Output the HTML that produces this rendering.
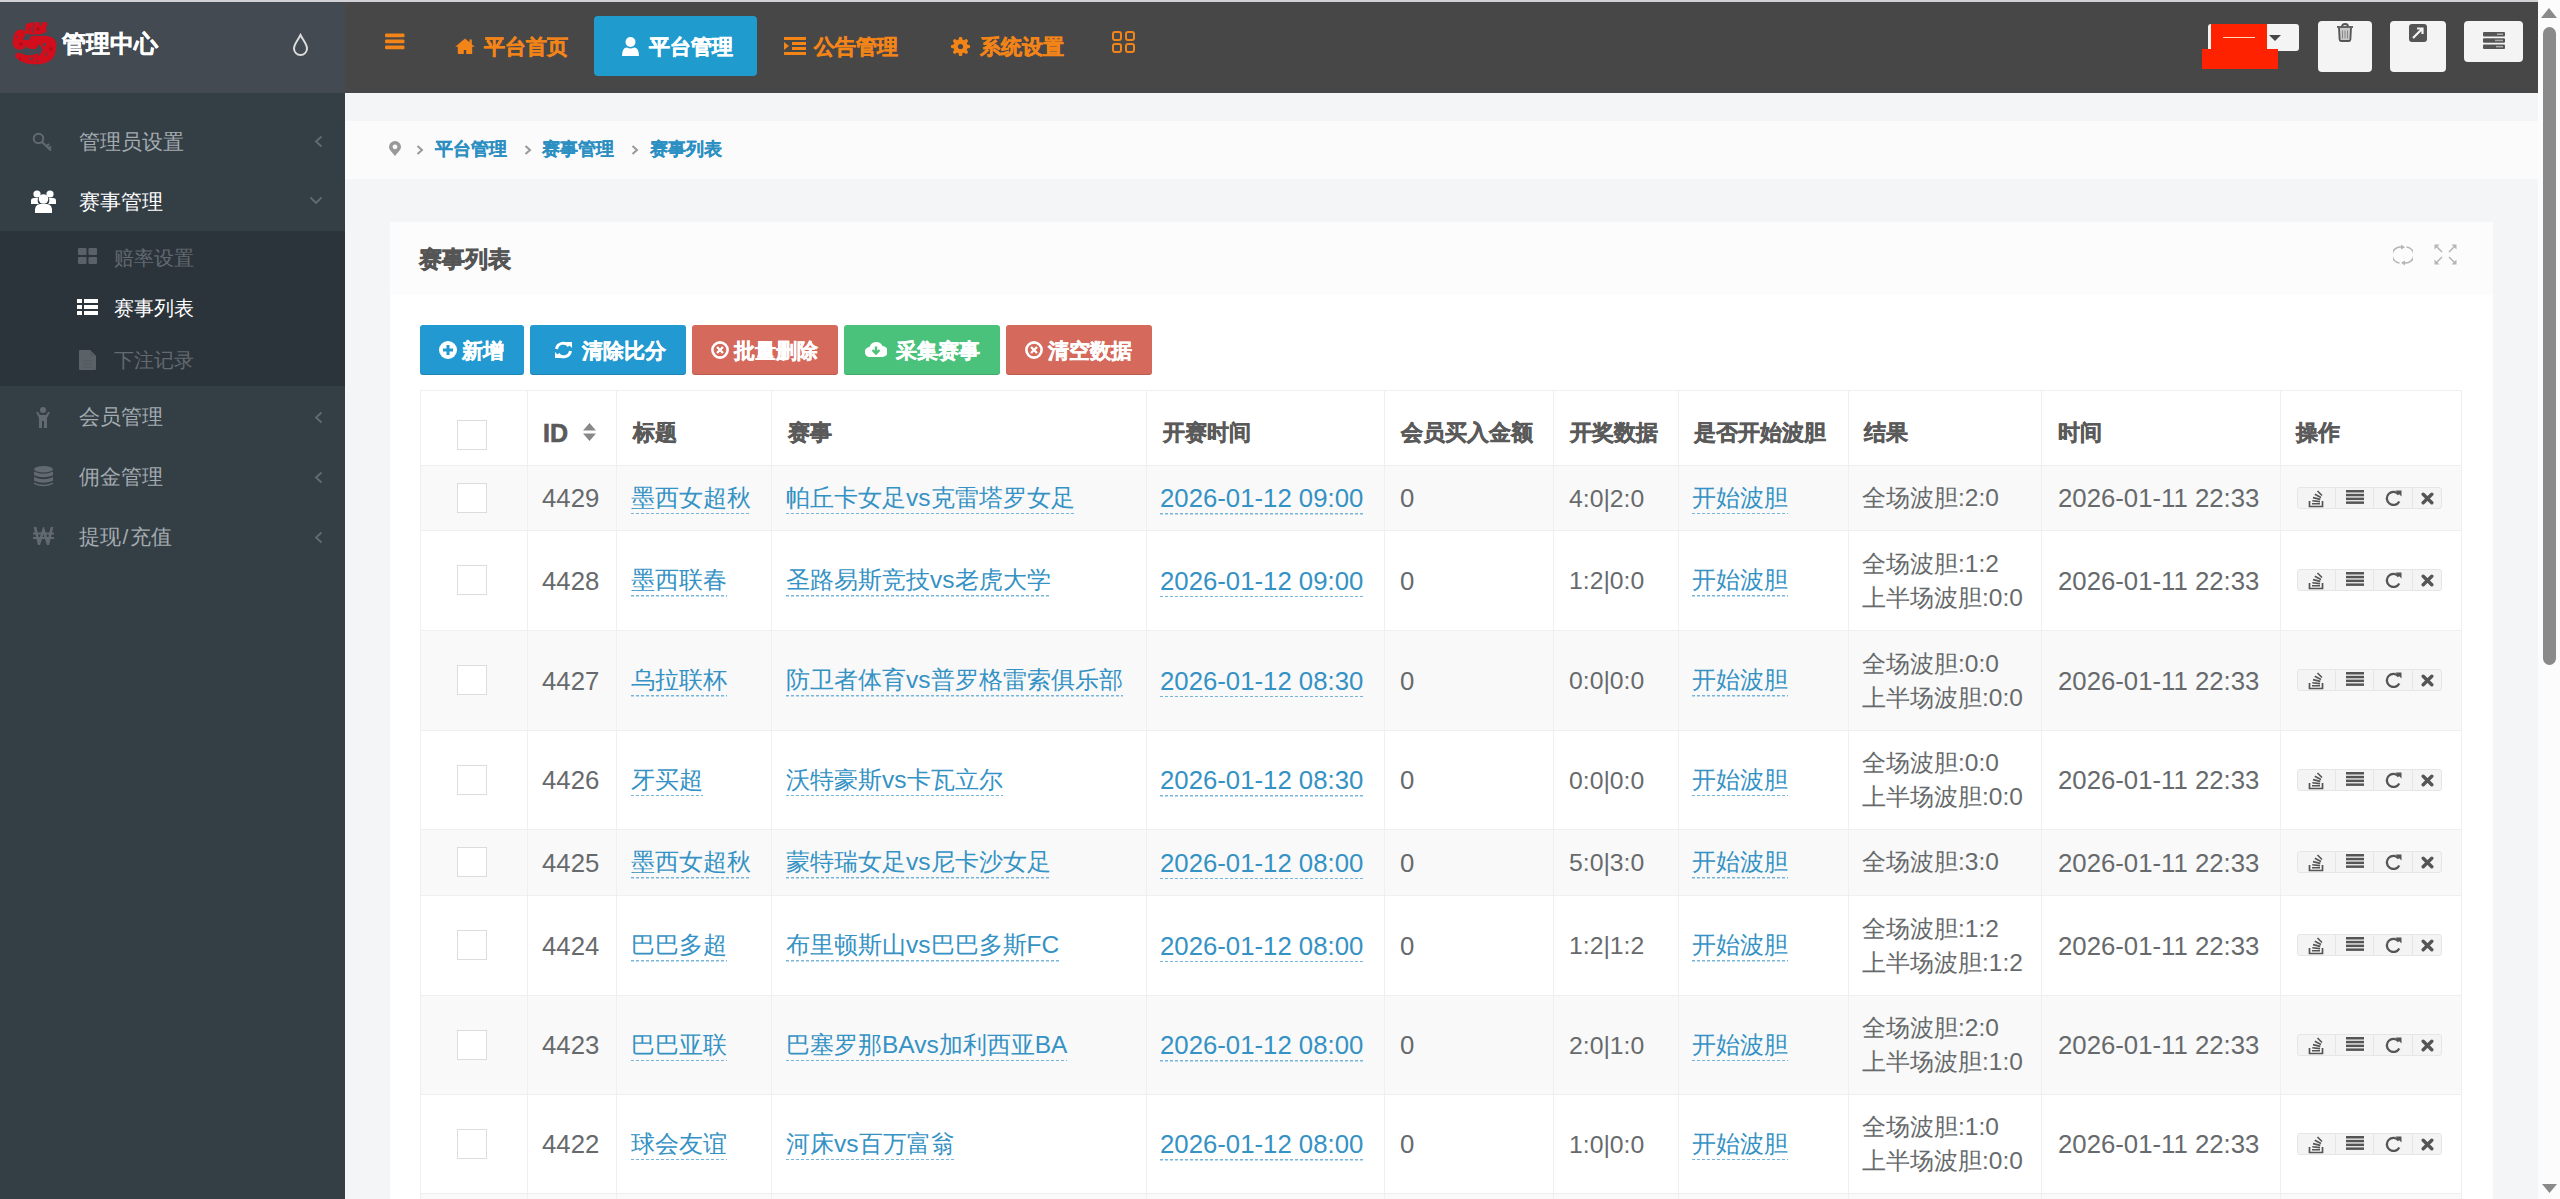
<!DOCTYPE html><html><head><meta charset="utf-8"><style>
*{box-sizing:border-box;margin:0;padding:0}
html,body{width:2560px;height:1199px;overflow:hidden;background:#f3f5f7;font-family:"Liberation Sans",sans-serif;color:#676a6c}
.a{position:absolute;white-space:nowrap}
.t{position:absolute;white-space:nowrap}
svg{position:absolute;display:block}
.lt{font-size:24.5px}
.lk{background:repeating-linear-gradient(90deg,#78b5da 0 3px,transparent 3px 5px) left bottom/100% 1.5px no-repeat;padding-bottom:3.5px}
</style></head><body><div class="a" style="left:0px;top:0px;width:2538px;height:2px;background:#d2d1d5;"></div>
<div class="a" style="left:0px;top:2px;width:345px;height:91px;background:#434a52;"></div>
<div class="a" style="left:0px;top:93px;width:345px;height:1106px;background:#343e45;"></div>
<div class="a" style="left:0px;top:231px;width:345px;height:155px;background:#2c343b;"></div>
<div class="a" style="left:345px;top:2px;width:2193px;height:91px;background:#474747;"></div>
<div class="a" style="left:2538px;top:0px;width:22px;height:1199px;background:#fcfcfc;"></div>
<svg style="left:8px;top:18px;" width="54" height="50" viewBox="0 0 54 50"><defs><filter id="bl" x="-20%" y="-20%" width="140%" height="140%"><feGaussianBlur stdDeviation="0.55"/></filter></defs>
<g filter="url(#bl)"><g fill="#d20d1a">
<path d="M18 6 Q24 3.5 31 4.5 L38 4 Q41 6 38 9 L38.5 14 Q33 17 26 16.5 Q20 17 17 15 Z"/>
<path d="M8 13 Q13 10 17 13 L17 19 Q15 26 17 30 L12 32 Q6 31 5 27 Q4 20 8 13Z"/>
<path d="M14 21 Q24 17 33 18 Q42 17 46 21 Q49 24 48 30 Q48 37 44 41 Q40 45 33 46 Q24 47 17 45 Q10 43 7 38 Q8 34 12 35 Q18 38 24 37 Q30 36 31 33 Q28 30 24 31 Q18 30 16 27Z"/>
</g><g fill="#434a52">
<path d="M16 19 L23 18 L21 22 L15 22Z"/>
<ellipse cx="15.5" cy="33.5" rx="3.2" ry="2.6"/>
<path d="M31 26 L35 31.5 L31 38 L27.5 32Z"/>
<circle cx="36.5" cy="26.5" r="1.6"/>
<path d="M25 6 L27 4 L26 15 L24 15Z" opacity="0.5"/>
<circle cx="33" cy="6" r="1.3"/>
<path d="M20 40 L26 39 L24 43Z" opacity="0.6"/>
<path d="M41 14 L44 18 L40 19Z" opacity="0.7"/>
<circle cx="9" cy="19" r="1.2" opacity="0.5"/>
<circle cx="29" cy="43" r="1.2" opacity="0.5"/>
<path d="M36 36 L40 34 L38 39Z" opacity="0.6"/>
<path d="M20 11 L23 9 L22 14Z" opacity="0.5"/>
</g><g fill="#9a1520" opacity="0.55"><circle cx="13" cy="26" r="2"/><circle cx="43" cy="31" r="2"/><circle cx="30" cy="11" r="2"/><circle cx="12" cy="41" r="1.6"/></g></g></svg>
<div class="t" style="left:62.0px;top:32.0px;font-size:24px;line-height:24px;font-weight:bold;color:#ffffff;-webkit-text-stroke:0.3px #ffffff;">管理中心</div>
<svg style="left:292px;top:33px;" width="17" height="24" viewBox="0 0 17 24"><path d="M8.5 2 C6 7 2 11 2 15.5 A6.5 6.5 0 0 0 15 15.5 C15 11 11 7 8.5 2Z" fill="none" stroke="#dcdcdc" stroke-width="2"/></svg>
<div class="t" style="left:79.0px;top:131.0px;font-size:21px;line-height:21px;font-weight:normal;color:#a3abb0;">管理员设置</div>
<div class="t" style="left:79.0px;top:191.0px;font-size:21px;line-height:21px;font-weight:normal;color:#ffffff;">赛事管理</div>
<div class="t" style="left:114.0px;top:248.0px;font-size:20px;line-height:20px;font-weight:normal;color:#626a70;">赔率设置</div>
<div class="t" style="left:114.0px;top:298.0px;font-size:20px;line-height:20px;font-weight:normal;color:#ffffff;">赛事列表</div>
<div class="t" style="left:114.0px;top:350.0px;font-size:20px;line-height:20px;font-weight:normal;color:#626a70;">下注记录</div>
<div class="t" style="left:79.0px;top:406.0px;font-size:21px;line-height:21px;font-weight:normal;color:#a3abb0;">会员管理</div>
<div class="t" style="left:79.0px;top:466.0px;font-size:21px;line-height:21px;font-weight:normal;color:#a3abb0;">佣金管理</div>
<div class="t" style="left:79.0px;top:526.0px;font-size:21px;line-height:21px;font-weight:normal;color:#a3abb0;">提现<span style="margin:0 1.5px">/</span>充值</div>
<svg style="left:314px;top:135px;" width="9" height="13" viewBox="0 0 9 13"><path d="M7.5 1.5 L2 6.5 L7.5 11.5" fill="none" stroke="#636b71" stroke-width="1.8"/></svg>
<svg style="left:314px;top:411px;" width="9" height="13" viewBox="0 0 9 13"><path d="M7.5 1.5 L2 6.5 L7.5 11.5" fill="none" stroke="#636b71" stroke-width="1.8"/></svg>
<svg style="left:314px;top:471px;" width="9" height="13" viewBox="0 0 9 13"><path d="M7.5 1.5 L2 6.5 L7.5 11.5" fill="none" stroke="#636b71" stroke-width="1.8"/></svg>
<svg style="left:314px;top:531px;" width="9" height="13" viewBox="0 0 9 13"><path d="M7.5 1.5 L2 6.5 L7.5 11.5" fill="none" stroke="#636b71" stroke-width="1.8"/></svg>
<svg style="left:309px;top:196px;" width="14" height="9" viewBox="0 0 14 9"><path d="M1.5 1.5 L7 7 L12.5 1.5" fill="none" stroke="#636b71" stroke-width="1.8"/></svg>
<svg style="left:32px;top:132px;" width="21" height="20" viewBox="0 0 21 20"><g fill="none" stroke="#626a70" stroke-width="2"><circle cx="6.5" cy="6.5" r="4.8"/><path d="M10 10 L19 18.5 M14.5 14.5 L17 12 M16.8 16.8 L19 14.5"/></g></svg>
<svg style="left:31px;top:190px;" width="25" height="23" viewBox="0 0 25 23"><g fill="#fff"><circle cx="6" cy="4" r="3.6"/><circle cx="19" cy="4" r="3.6"/><circle cx="12.5" cy="9" r="4.8"/><path d="M0 10.5 Q0 8 3 8 L7 8 Q6 12 8 14 L0 14Z"/><path d="M25 10.5 Q25 8 22 8 L18 8 Q19 12 17 14 L25 14Z"/><path d="M4 23 Q3 14.5 9 14 L16 14 Q22 14.5 21 23Z"/></g></svg>
<svg style="left:78px;top:248px;" width="19" height="16" viewBox="0 0 19 16"><g fill="#5a6268"><rect x="0" y="0" width="8.5" height="7" rx="1"/><rect x="10.5" y="0" width="8.5" height="7" rx="1"/><rect x="0" y="9" width="8.5" height="7" rx="1"/><rect x="10.5" y="9" width="8.5" height="7" rx="1"/></g></svg>
<svg style="left:77px;top:299px;" width="21" height="16" viewBox="0 0 21 16"><g fill="#fff"><rect x="0" y="0" width="5" height="4"/><rect x="7" y="0" width="14" height="4"/><rect x="0" y="6" width="5" height="4"/><rect x="7" y="6" width="14" height="4"/><rect x="0" y="12" width="5" height="4"/><rect x="7" y="12" width="14" height="4"/></g></svg>
<svg style="left:79px;top:350px;" width="17" height="20" viewBox="0 0 17 20"><path d="M0 1 Q0 0 1 0 L11 0 L17 6 L17 19 Q17 20 16 20 L1 20 Q0 20 0 19Z" fill="#5a6268"/><path d="M11 0 L11 6 L17 6" fill="#545c61"/><g stroke="#545c61" stroke-width="1.4"><path d="M4 11 H13 M4 14 H13 M4 17 H13"/></g></svg>
<svg style="left:35px;top:407px;" width="16" height="21" viewBox="0 0 16 21"><g fill="#626a70"><circle cx="8" cy="3" r="3"/><path d="M1 5 L3 5 L5 8 L11 8 L13 5 L15 5 L12 11 L12 21 L9 21 L9 14 L7 14 L7 21 L4 21 L4 11Z"/></g></svg>
<svg style="left:34px;top:466px;" width="19" height="21" viewBox="0 0 19 21"><g fill="#626a70"><ellipse cx="9.5" cy="3.2" rx="9.5" ry="3.2"/><path d="M0 5.5 Q9.5 10 19 5.5 L19 9.2 Q9.5 13.5 0 9.2Z"/><path d="M0 11 Q9.5 15.5 19 11 L19 14.7 Q9.5 19 0 14.7Z"/><path d="M0 16.5 Q9.5 21 19 16.5 L19 18 Q9.5 22.5 0 18Z"/></g></svg>
<svg style="left:33px;top:527px;" width="21" height="18" viewBox="0 0 21 18"><g fill="none" stroke="#626a70" stroke-width="2.6"><path d="M2 0 L6 17 L10.5 3 L15 17 L19 0"/><path d="M0 6.5 H21 M0 11 H21" stroke-width="2"/></g></svg>
<svg style="left:385px;top:33px;" width="20" height="17" viewBox="0 0 20 17"><g fill="#f28418"><rect x="0" y="0.6" width="19.5" height="3.6" rx="1.2"/><rect x="0" y="6.6" width="19.5" height="3.6" rx="1.2"/><rect x="0" y="12.6" width="19.5" height="3.6" rx="1.2"/></g></svg>
<svg style="left:455px;top:37px;" width="20" height="18" viewBox="0 0 20 18"><path d="M10 1.5 L14.5 5.2 L14.5 2.5 L16.8 2.5 L16.8 7.2 L19.8 9.8 L17.2 9.8 L17.2 17 L11.2 17 L11.2 13 L8.8 13 L8.8 17 L2.8 17 L2.8 9.8 L0.2 9.8Z" fill="#f28418"/></svg>
<div class="t" style="left:484.0px;top:36.0px;font-size:21px;line-height:21px;font-weight:bold;color:#f28418;-webkit-text-stroke:0.45px #f28418;">平台首页</div>
<div class="a" style="left:594px;top:16px;width:163px;height:60px;background:#209bce;border-radius:4px"></div>
<svg style="left:622px;top:37px;" width="17" height="19" viewBox="0 0 17 19"><g fill="#fff"><ellipse cx="8.5" cy="5" rx="5" ry="5"/><path d="M0 19 Q0 10.5 5 10.5 Q8.5 12.5 12 10.5 Q17 10.5 17 19Z"/></g></svg>
<div class="t" style="left:649.0px;top:36.0px;font-size:21px;line-height:21px;font-weight:bold;color:#ffffff;-webkit-text-stroke:0.45px #ffffff;">平台管理</div>
<svg style="left:784px;top:37px;" width="22" height="18" viewBox="0 0 22 18"><g fill="#f28418"><rect x="0" y="0" width="22" height="3"/><rect x="8" y="5" width="14" height="3"/><rect x="8" y="10" width="14" height="3"/><rect x="0" y="15" width="22" height="3"/><path d="M0 5 L5 9 L0 13Z"/></g></svg>
<div class="t" style="left:814.0px;top:36.0px;font-size:21px;line-height:21px;font-weight:bold;color:#f28418;-webkit-text-stroke:0.45px #f28418;">公告管理</div>
<svg style="left:951px;top:37px;" width="19" height="19" viewBox="0 0 19 19"><g fill="#f28418"><circle cx="9.5" cy="9.5" r="7.2"/><g stroke="#f28418" stroke-width="3.6" stroke-linecap="round"><path d="M9.5 1.6 V17.4 M1.6 9.5 H17.4 M3.9 3.9 L15.1 15.1 M15.1 3.9 L3.9 15.1"/></g></g><circle cx="9.5" cy="9.5" r="2.6" fill="#474747"/></svg>
<div class="t" style="left:980.0px;top:36.0px;font-size:21px;line-height:21px;font-weight:bold;color:#f28418;-webkit-text-stroke:0.45px #f28418;">系统设置</div>
<svg style="left:1112px;top:31px;" width="23" height="22" viewBox="0 0 23 22"><g fill="none" stroke="#f28418" stroke-width="2"><rect x="1" y="1" width="8" height="8" rx="2"/><rect x="14" y="1" width="8" height="8" rx="2"/><rect x="1" y="13" width="8" height="8" rx="2"/><rect x="14" y="13" width="8" height="8" rx="2"/></g></svg>
<div class="a" style="left:2208px;top:24px;width:91px;height:27px;background:#f4f4f4;border-radius:3px"></div>
<svg style="left:2269px;top:35px;" width="12" height="6" viewBox="0 0 12 6"><path d="M0 0 H12 L6 6Z" fill="#474747"/></svg>
<div class="a" style="left:2211px;top:24px;width:56px;height:25px;background:#ff2200;"></div>
<div class="a" style="left:2202px;top:49px;width:76px;height:20px;background:#ff2200;"></div>
<div class="a" style="left:2223px;top:37px;width:32px;height:1px;background:#ffd9b0;"></div>
<div class="a" style="left:2318px;top:21px;width:54px;height:51px;background:#f4f4f4;border-radius:4px"></div>
<svg style="left:2336px;top:23px;" width="18" height="19" viewBox="0 0 18 19"><g fill="none" stroke="#555" stroke-width="1.8"><path d="M1 4 H17"/><path d="M6 3.5 Q6 1 9 1 Q12 1 12 3.5"/><path d="M3 5 L3.6 16.5 Q3.7 18 5 18 H13 Q14.3 18 14.4 16.5 L15 5" fill="#c8c8c8"/></g><g stroke="#888" stroke-width="1"><path d="M6.5 7.5 V15.5 M9 7.5 V15.5 M11.5 7.5 V15.5"/></g></svg>
<div class="a" style="left:2390px;top:21px;width:56px;height:51px;background:#f4f4f4;border-radius:4px"></div>
<svg style="left:2409px;top:24px;" width="18" height="18" viewBox="0 0 18 18"><rect x="0" y="0" width="18" height="18" rx="3" fill="#555"/><path d="M4 14 L13 5 M8 4.5 H13.5 V10" fill="none" stroke="#f4f4f4" stroke-width="2.2"/></svg>
<div class="a" style="left:2464px;top:21px;width:59px;height:41px;background:#f4f4f4;border-radius:4px"></div>
<svg style="left:2483px;top:32px;" width="22" height="17" viewBox="0 0 22 17"><g fill="#555"><rect x="0" y="0" width="22" height="4.5" rx="1"/><rect x="0" y="6.2" width="22" height="4.5" rx="1"/><rect x="0" y="12.4" width="22" height="4.5" rx="1"/></g><g fill="#aaa"><rect x="14" y="1.5" width="6" height="1.5"/><rect x="12" y="7.7" width="8" height="1.5"/><rect x="13" y="13.9" width="7" height="1.5"/></g></svg>
<svg style="left:2541px;top:8px;" width="16" height="10" viewBox="0 0 16 10"><path d="M8 0 L16 10 H0Z" fill="#8a8a8a"/></svg>
<div class="a" style="left:2543px;top:27px;width:13px;height:638px;background:#8a8a8a;border-radius:7px"></div>
<svg style="left:2542px;top:1184px;" width="15" height="9" viewBox="0 0 15 9"><path d="M0 0 H15 L7.5 9Z" fill="#8a8a8a"/></svg>
<div class="a" style="left:345px;top:121px;width:2193px;height:58px;background:#fbfbfc;"></div>
<svg style="left:389px;top:141px;" width="12" height="15" viewBox="0 0 12 15"><path d="M6 0 A6 6 0 0 1 12 6 C12 9 8 12 6 15 C4 12 0 9 0 6 A6 6 0 0 1 6 0Z" fill="#999"/><circle cx="6" cy="5.8" r="2.4" fill="#fbfbfc"/></svg>
<svg style="left:416px;top:145px;" width="8" height="10" viewBox="0 0 8 10"><path d="M1.5 1 L6 5 L1.5 9" fill="none" stroke="#999" stroke-width="2"/></svg>
<div class="t" style="left:435.0px;top:140.0px;font-size:18px;line-height:18px;font-weight:bold;color:#2b8fc2;-webkit-text-stroke:0.15px #2b8fc2;">平台管理</div>
<svg style="left:524px;top:145px;" width="8" height="10" viewBox="0 0 8 10"><path d="M1.5 1 L6 5 L1.5 9" fill="none" stroke="#999" stroke-width="2"/></svg>
<div class="t" style="left:542.0px;top:140.0px;font-size:18px;line-height:18px;font-weight:bold;color:#2b8fc2;-webkit-text-stroke:0.15px #2b8fc2;">赛事管理</div>
<svg style="left:631px;top:145px;" width="8" height="10" viewBox="0 0 8 10"><path d="M1.5 1 L6 5 L1.5 9" fill="none" stroke="#999" stroke-width="2"/></svg>
<div class="t" style="left:650.0px;top:140.0px;font-size:18px;line-height:18px;font-weight:bold;color:#2b8fc2;-webkit-text-stroke:0.15px #2b8fc2;">赛事列表</div>
<div class="a" style="left:390px;top:222px;width:2103px;height:977px;background:#ffffff;"></div>
<div class="a" style="left:390px;top:222px;width:2103px;height:73px;background:#fcfcfc;"></div>
<div class="t" style="left:419.0px;top:248.0px;font-size:23px;line-height:23px;font-weight:bold;color:#555;-webkit-text-stroke:0.6px #555;">赛事列表</div>
<svg style="left:2393px;top:244px;" width="20" height="22" viewBox="0 0 20 22"><g fill="none" stroke="#b5b5b5" stroke-width="1.5"><path d="M8 3 A8 8 0 0 0 6.5 19"/><path d="M12 19 A8 8 0 0 0 13.5 3"/></g><g fill="#b5b5b5"><path d="M8 0.5 L12 3.2 L8 5.5Z"/><path d="M12 21.5 L8 18.8 L12 16.5Z"/></g></svg>
<svg style="left:2434px;top:244px;" width="23" height="21" viewBox="0 0 23 21"><g fill="none" stroke="#b5b5b5" stroke-width="1.5"><path d="M2 2 L8 8 M21 2 L15 8 M2 19 L8 13 M21 19 L15 13"/></g><g fill="#b5b5b5"><path d="M0.5 0.5 H5.5 L0.5 5.5Z"/><path d="M22.5 0.5 H17.5 L22.5 5.5Z"/><path d="M0.5 20.5 H5.5 L0.5 15.5Z"/><path d="M22.5 20.5 H17.5 L22.5 15.5Z"/></g></svg>
<div class="a" style="left:420px;top:325px;width:104px;height:50px;background:#2299d0;border-radius:3px;box-shadow:inset 0 -1px 0 rgba(0,0,0,.12)"></div>
<svg style="left:439px;top:341px" width="18" height="18" viewBox="0 0 18 18"><circle cx="9" cy="9" r="9" fill="#fff"/><path d="M9 4 V14 M4 9 H14" stroke="#2299d0" stroke-width="3"/></svg>
<div class="t" style="left:462.0px;top:340.0px;font-size:21px;line-height:21px;font-weight:bold;color:#fff;-webkit-text-stroke:0.35px #fff;">新增</div>
<div class="a" style="left:530px;top:325px;width:156px;height:50px;background:#2299d0;border-radius:3px;box-shadow:inset 0 -1px 0 rgba(0,0,0,.12)"></div>
<svg style="left:554px;top:341px" width="19" height="18" viewBox="0 0 19 18"><g fill="none" stroke="#fff" stroke-width="3"><path d="M2.5 8 A7 7 0 0 1 15 5"/><path d="M16.5 10 A7 7 0 0 1 4 13"/></g><g fill="#fff"><path d="M12 1 L18 1 L18 7Z"/><path d="M7 17 L1 17 L1 11Z"/></g></svg>
<div class="t" style="left:582.0px;top:340.0px;font-size:21px;line-height:21px;font-weight:bold;color:#fff;-webkit-text-stroke:0.35px #fff;">清除比分</div>
<div class="a" style="left:692px;top:325px;width:146px;height:50px;background:#d4695c;border-radius:3px;box-shadow:inset 0 -1px 0 rgba(0,0,0,.12)"></div>
<svg style="left:711px;top:341px" width="18" height="18" viewBox="0 0 18 18"><circle cx="9" cy="9" r="7.6" fill="none" stroke="#fff" stroke-width="2.6"/><path d="M6 6 L12 12 M12 6 L6 12" stroke="#fff" stroke-width="2.4"/></svg>
<div class="t" style="left:734.0px;top:340.0px;font-size:21px;line-height:21px;font-weight:bold;color:#fff;-webkit-text-stroke:0.35px #fff;">批量删除</div>
<div class="a" style="left:844px;top:325px;width:156px;height:50px;background:#4bc27b;border-radius:3px;box-shadow:inset 0 -1px 0 rgba(0,0,0,.12)"></div>
<svg style="left:865px;top:340px" width="22" height="18" viewBox="0 0 22 18"><path d="M5 17 A5 5 0 0 1 4.5 7 A7 7 0 0 1 17.5 6 A5.5 5.5 0 0 1 17 17Z" fill="#fff"/><path d="M11 6.5 V13 M7.5 10 L11 13.5 L14.5 10" fill="none" stroke="#4bc27b" stroke-width="2.4"/></svg>
<div class="t" style="left:896.0px;top:340.0px;font-size:21px;line-height:21px;font-weight:bold;color:#fff;-webkit-text-stroke:0.35px #fff;">采集赛事</div>
<div class="a" style="left:1006px;top:325px;width:146px;height:50px;background:#d4695c;border-radius:3px;box-shadow:inset 0 -1px 0 rgba(0,0,0,.12)"></div>
<svg style="left:1025px;top:341px" width="18" height="18" viewBox="0 0 18 18"><circle cx="9" cy="9" r="7.6" fill="none" stroke="#fff" stroke-width="2.6"/><path d="M6 6 L12 12 M12 6 L6 12" stroke="#fff" stroke-width="2.4"/></svg>
<div class="t" style="left:1048.0px;top:340.0px;font-size:21px;line-height:21px;font-weight:bold;color:#fff;-webkit-text-stroke:0.35px #fff;">清空数据</div>
<div class="a" style="left:420px;top:390px;width:2042px;height:1px;background:#efefef;"></div>
<div class="a" style="left:420px;top:465px;width:2042px;height:65px;background:#f9f9f9;"></div>
<div class="a" style="left:420px;top:630px;width:2042px;height:100px;background:#f9f9f9;"></div>
<div class="a" style="left:420px;top:829px;width:2042px;height:66px;background:#f9f9f9;"></div>
<div class="a" style="left:420px;top:995px;width:2042px;height:99px;background:#f9f9f9;"></div>
<div class="a" style="left:420px;top:1193px;width:2042px;height:67px;background:#f9f9f9;"></div>
<div class="a" style="left:420px;top:465px;width:2042px;height:1px;background:#efefef;"></div>
<div class="a" style="left:420px;top:530px;width:2042px;height:1px;background:#efefef;"></div>
<div class="a" style="left:420px;top:630px;width:2042px;height:1px;background:#efefef;"></div>
<div class="a" style="left:420px;top:730px;width:2042px;height:1px;background:#efefef;"></div>
<div class="a" style="left:420px;top:829px;width:2042px;height:1px;background:#efefef;"></div>
<div class="a" style="left:420px;top:895px;width:2042px;height:1px;background:#efefef;"></div>
<div class="a" style="left:420px;top:995px;width:2042px;height:1px;background:#efefef;"></div>
<div class="a" style="left:420px;top:1094px;width:2042px;height:1px;background:#efefef;"></div>
<div class="a" style="left:420px;top:1193px;width:2042px;height:1px;background:#efefef;"></div>
<div class="a" style="left:420px;top:391px;width:1px;height:808px;background:#efefef;"></div>
<div class="a" style="left:527px;top:391px;width:1px;height:808px;background:#efefef;"></div>
<div class="a" style="left:616px;top:391px;width:1px;height:808px;background:#efefef;"></div>
<div class="a" style="left:771px;top:391px;width:1px;height:808px;background:#efefef;"></div>
<div class="a" style="left:1146px;top:391px;width:1px;height:808px;background:#efefef;"></div>
<div class="a" style="left:1384px;top:391px;width:1px;height:808px;background:#efefef;"></div>
<div class="a" style="left:1553px;top:391px;width:1px;height:808px;background:#efefef;"></div>
<div class="a" style="left:1678px;top:391px;width:1px;height:808px;background:#efefef;"></div>
<div class="a" style="left:1848px;top:391px;width:1px;height:808px;background:#efefef;"></div>
<div class="a" style="left:2041px;top:391px;width:1px;height:808px;background:#efefef;"></div>
<div class="a" style="left:2280px;top:391px;width:1px;height:808px;background:#efefef;"></div>
<div class="a" style="left:2461px;top:391px;width:1px;height:808px;background:#efefef;"></div>
<div class="t" style="left:543.0px;top:422.0px;font-size:22.5px;line-height:22.5px;font-weight:bold;color:#5a5a5a;-webkit-text-stroke:0.6px #5a5a5a;"><span style="font-size:25px">ID</span></div>
<svg style="left:583px;top:423px;" width="13" height="18" viewBox="0 0 13 18"><g fill="#888"><path d="M6.5 0 L13 7.5 H0Z"/><path d="M6.5 18 L13 10.5 H0Z"/></g></svg>
<div class="t" style="left:632.5px;top:422.0px;font-size:22px;line-height:22px;font-weight:bold;color:#5a5a5a;-webkit-text-stroke:0.45px #5a5a5a;">标题</div>
<div class="t" style="left:787.5px;top:422.0px;font-size:22px;line-height:22px;font-weight:bold;color:#5a5a5a;-webkit-text-stroke:0.45px #5a5a5a;">赛事</div>
<div class="t" style="left:1162.5px;top:422.0px;font-size:22px;line-height:22px;font-weight:bold;color:#5a5a5a;-webkit-text-stroke:0.45px #5a5a5a;">开赛时间</div>
<div class="t" style="left:1400.5px;top:422.0px;font-size:22px;line-height:22px;font-weight:bold;color:#5a5a5a;-webkit-text-stroke:0.45px #5a5a5a;">会员买入金额</div>
<div class="t" style="left:1569.5px;top:422.0px;font-size:22px;line-height:22px;font-weight:bold;color:#5a5a5a;-webkit-text-stroke:0.45px #5a5a5a;">开奖数据</div>
<div class="t" style="left:1693.5px;top:422.0px;font-size:22px;line-height:22px;font-weight:bold;color:#5a5a5a;-webkit-text-stroke:0.45px #5a5a5a;">是否开始波胆</div>
<div class="t" style="left:1863.5px;top:422.0px;font-size:22px;line-height:22px;font-weight:bold;color:#5a5a5a;-webkit-text-stroke:0.45px #5a5a5a;">结果</div>
<div class="t" style="left:2057.5px;top:422.0px;font-size:22px;line-height:22px;font-weight:bold;color:#5a5a5a;-webkit-text-stroke:0.45px #5a5a5a;">时间</div>
<div class="t" style="left:2295.5px;top:422.0px;font-size:22px;line-height:22px;font-weight:bold;color:#5a5a5a;-webkit-text-stroke:0.45px #5a5a5a;">操作</div>
<div class="a" style="left:457px;top:420px;width:30px;height:30px;background:#fff;border:1px solid #dcdcdc"></div>
<div class="a" style="left:457px;top:483px;width:30px;height:30px;background:#fff;border:1px solid #dcdcdc"></div>
<div class="t" style="left:542px;top:485.0px;font-size:25.75px;line-height:26px;color:#676a6c">4429</div>
<div class="t" style="left:631px;top:485.5px;font-size:24px;line-height:24px;color:#3592c4"><span class="lk">墨西女超秋</span></div>
<div class="t" style="left:786px;top:485.5px;font-size:24px;line-height:24px;color:#3592c4"><span class="lk">帕丘卡女足<span class="lt">vs</span>克雷塔罗女足</span></div>
<div class="t" style="left:1160px;top:485.0px;font-size:25.75px;line-height:26px;color:#3592c4"><span class="lk" style="padding-bottom:2.5px">2026-01-12 09:00</span></div>
<div class="t" style="left:1400px;top:485.0px;font-size:25.75px;line-height:26px;color:#676a6c">0</div>
<div class="t" style="left:1569px;top:485.5px;font-size:24.75px;line-height:26px;color:#676a6c">4:0|2:0</div>
<div class="t" style="left:1692px;top:485.5px;font-size:24px;line-height:24px;color:#3592c4"><span class="lk">开始波胆</span></div>
<div class="t" style="left:2058px;top:485.0px;font-size:25.75px;line-height:26px;color:#676a6c">2026-01-11 22:33</div>
<div class="a" style="left:2297px;top:487px;width:145px;height:22px;background:#f4f4f4;border:1px solid #e6e6e6;border-radius:3px"></div>
<div class="a" style="left:2335px;top:487px;width:1px;height:22px;background:#e6e6e6;"></div>
<div class="a" style="left:2373px;top:487px;width:1px;height:22px;background:#e6e6e6;"></div>
<div class="a" style="left:2412px;top:487px;width:1px;height:22px;background:#e6e6e6;"></div>
<svg style="left:2308px;top:489px;" width="16" height="19" viewBox="0 0 16 19"><g fill="none" stroke="#555" stroke-width="1.7"><path d="M1.5 12 V17.5 H14.5 V12"/></g><g stroke="#555" stroke-width="1.6"><path d="M4 14.8 H12 M4.3 11.8 L12 12.6 M5 8.6 L12.3 10.4 M6.8 5.3 L13 8.5 M9.5 2 L14 6.5"/></g></svg>
<svg style="left:2346px;top:490px;" width="18" height="14" viewBox="0 0 18 14"><g fill="#555"><rect x="0" y="0" width="18" height="2.5"/><rect x="0" y="3.8" width="18" height="2.5"/><rect x="0" y="7.6" width="18" height="2.5"/><rect x="0" y="11.4" width="18" height="2.5"/></g></svg>
<svg style="left:2385px;top:490px;" width="17" height="16" viewBox="0 0 17 16"><path d="M13.8 4.5 A6.6 6.6 0 1 0 14.3 11.5" fill="none" stroke="#555" stroke-width="2.3"/><path d="M10.5 0.5 H16.5 V6.5Z" fill="#555"/></svg>
<svg style="left:2421px;top:492px;" width="13" height="13" viewBox="0 0 13 13"><path d="M2.2 2.2 L10.8 10.8 M10.8 2.2 L2.2 10.8" stroke="#555" stroke-width="3.4" stroke-linecap="round"/></svg>
<div class="t" style="left:1862px;top:485.5px;font-size:24px;line-height:24px;color:#676a6c">全场波胆<span class="lt">:2:0</span></div>
<div class="a" style="left:457px;top:565px;width:30px;height:30px;background:#fff;border:1px solid #dcdcdc"></div>
<div class="t" style="left:542px;top:567.5px;font-size:25.75px;line-height:26px;color:#676a6c">4428</div>
<div class="t" style="left:631px;top:568.0px;font-size:24px;line-height:24px;color:#3592c4"><span class="lk">墨西联春</span></div>
<div class="t" style="left:786px;top:568.0px;font-size:24px;line-height:24px;color:#3592c4"><span class="lk">圣路易斯竞技<span class="lt">vs</span>老虎大学</span></div>
<div class="t" style="left:1160px;top:567.5px;font-size:25.75px;line-height:26px;color:#3592c4"><span class="lk" style="padding-bottom:2.5px">2026-01-12 09:00</span></div>
<div class="t" style="left:1400px;top:567.5px;font-size:25.75px;line-height:26px;color:#676a6c">0</div>
<div class="t" style="left:1569px;top:568.0px;font-size:24.75px;line-height:26px;color:#676a6c">1:2|0:0</div>
<div class="t" style="left:1692px;top:568.0px;font-size:24px;line-height:24px;color:#3592c4"><span class="lk">开始波胆</span></div>
<div class="t" style="left:2058px;top:567.5px;font-size:25.75px;line-height:26px;color:#676a6c">2026-01-11 22:33</div>
<div class="a" style="left:2297px;top:569px;width:145px;height:22px;background:#f4f4f4;border:1px solid #e6e6e6;border-radius:3px"></div>
<div class="a" style="left:2335px;top:569px;width:1px;height:22px;background:#e6e6e6;"></div>
<div class="a" style="left:2373px;top:569px;width:1px;height:22px;background:#e6e6e6;"></div>
<div class="a" style="left:2412px;top:569px;width:1px;height:22px;background:#e6e6e6;"></div>
<svg style="left:2308px;top:571px;" width="16" height="19" viewBox="0 0 16 19"><g fill="none" stroke="#555" stroke-width="1.7"><path d="M1.5 12 V17.5 H14.5 V12"/></g><g stroke="#555" stroke-width="1.6"><path d="M4 14.8 H12 M4.3 11.8 L12 12.6 M5 8.6 L12.3 10.4 M6.8 5.3 L13 8.5 M9.5 2 L14 6.5"/></g></svg>
<svg style="left:2346px;top:572px;" width="18" height="14" viewBox="0 0 18 14"><g fill="#555"><rect x="0" y="0" width="18" height="2.5"/><rect x="0" y="3.8" width="18" height="2.5"/><rect x="0" y="7.6" width="18" height="2.5"/><rect x="0" y="11.4" width="18" height="2.5"/></g></svg>
<svg style="left:2385px;top:572px;" width="17" height="16" viewBox="0 0 17 16"><path d="M13.8 4.5 A6.6 6.6 0 1 0 14.3 11.5" fill="none" stroke="#555" stroke-width="2.3"/><path d="M10.5 0.5 H16.5 V6.5Z" fill="#555"/></svg>
<svg style="left:2421px;top:574px;" width="13" height="13" viewBox="0 0 13 13"><path d="M2.2 2.2 L10.8 10.8 M10.8 2.2 L2.2 10.8" stroke="#555" stroke-width="3.4" stroke-linecap="round"/></svg>
<div class="t" style="left:1862px;top:546.5px;font-size:24px;line-height:34px;color:#676a6c">全场波胆<span class="lt">:1:2</span><br>上半场波胆<span class="lt">:0:0</span></div>
<div class="a" style="left:457px;top:665px;width:30px;height:30px;background:#fff;border:1px solid #dcdcdc"></div>
<div class="t" style="left:542px;top:667.5px;font-size:25.75px;line-height:26px;color:#676a6c">4427</div>
<div class="t" style="left:631px;top:668.0px;font-size:24px;line-height:24px;color:#3592c4"><span class="lk">乌拉联杯</span></div>
<div class="t" style="left:786px;top:668.0px;font-size:24px;line-height:24px;color:#3592c4"><span class="lk">防卫者体育<span class="lt">vs</span>普罗格雷索俱乐部</span></div>
<div class="t" style="left:1160px;top:667.5px;font-size:25.75px;line-height:26px;color:#3592c4"><span class="lk" style="padding-bottom:2.5px">2026-01-12 08:30</span></div>
<div class="t" style="left:1400px;top:667.5px;font-size:25.75px;line-height:26px;color:#676a6c">0</div>
<div class="t" style="left:1569px;top:668.0px;font-size:24.75px;line-height:26px;color:#676a6c">0:0|0:0</div>
<div class="t" style="left:1692px;top:668.0px;font-size:24px;line-height:24px;color:#3592c4"><span class="lk">开始波胆</span></div>
<div class="t" style="left:2058px;top:667.5px;font-size:25.75px;line-height:26px;color:#676a6c">2026-01-11 22:33</div>
<div class="a" style="left:2297px;top:669px;width:145px;height:22px;background:#f4f4f4;border:1px solid #e6e6e6;border-radius:3px"></div>
<div class="a" style="left:2335px;top:669px;width:1px;height:22px;background:#e6e6e6;"></div>
<div class="a" style="left:2373px;top:669px;width:1px;height:22px;background:#e6e6e6;"></div>
<div class="a" style="left:2412px;top:669px;width:1px;height:22px;background:#e6e6e6;"></div>
<svg style="left:2308px;top:671px;" width="16" height="19" viewBox="0 0 16 19"><g fill="none" stroke="#555" stroke-width="1.7"><path d="M1.5 12 V17.5 H14.5 V12"/></g><g stroke="#555" stroke-width="1.6"><path d="M4 14.8 H12 M4.3 11.8 L12 12.6 M5 8.6 L12.3 10.4 M6.8 5.3 L13 8.5 M9.5 2 L14 6.5"/></g></svg>
<svg style="left:2346px;top:672px;" width="18" height="14" viewBox="0 0 18 14"><g fill="#555"><rect x="0" y="0" width="18" height="2.5"/><rect x="0" y="3.8" width="18" height="2.5"/><rect x="0" y="7.6" width="18" height="2.5"/><rect x="0" y="11.4" width="18" height="2.5"/></g></svg>
<svg style="left:2385px;top:672px;" width="17" height="16" viewBox="0 0 17 16"><path d="M13.8 4.5 A6.6 6.6 0 1 0 14.3 11.5" fill="none" stroke="#555" stroke-width="2.3"/><path d="M10.5 0.5 H16.5 V6.5Z" fill="#555"/></svg>
<svg style="left:2421px;top:674px;" width="13" height="13" viewBox="0 0 13 13"><path d="M2.2 2.2 L10.8 10.8 M10.8 2.2 L2.2 10.8" stroke="#555" stroke-width="3.4" stroke-linecap="round"/></svg>
<div class="t" style="left:1862px;top:646.5px;font-size:24px;line-height:34px;color:#676a6c">全场波胆<span class="lt">:0:0</span><br>上半场波胆<span class="lt">:0:0</span></div>
<div class="a" style="left:457px;top:765px;width:30px;height:30px;background:#fff;border:1px solid #dcdcdc"></div>
<div class="t" style="left:542px;top:767.0px;font-size:25.75px;line-height:26px;color:#676a6c">4426</div>
<div class="t" style="left:631px;top:767.5px;font-size:24px;line-height:24px;color:#3592c4"><span class="lk">牙买超</span></div>
<div class="t" style="left:786px;top:767.5px;font-size:24px;line-height:24px;color:#3592c4"><span class="lk">沃特豪斯<span class="lt">vs</span>卡瓦立尔</span></div>
<div class="t" style="left:1160px;top:767.0px;font-size:25.75px;line-height:26px;color:#3592c4"><span class="lk" style="padding-bottom:2.5px">2026-01-12 08:30</span></div>
<div class="t" style="left:1400px;top:767.0px;font-size:25.75px;line-height:26px;color:#676a6c">0</div>
<div class="t" style="left:1569px;top:767.5px;font-size:24.75px;line-height:26px;color:#676a6c">0:0|0:0</div>
<div class="t" style="left:1692px;top:767.5px;font-size:24px;line-height:24px;color:#3592c4"><span class="lk">开始波胆</span></div>
<div class="t" style="left:2058px;top:767.0px;font-size:25.75px;line-height:26px;color:#676a6c">2026-01-11 22:33</div>
<div class="a" style="left:2297px;top:769px;width:145px;height:22px;background:#f4f4f4;border:1px solid #e6e6e6;border-radius:3px"></div>
<div class="a" style="left:2335px;top:769px;width:1px;height:22px;background:#e6e6e6;"></div>
<div class="a" style="left:2373px;top:769px;width:1px;height:22px;background:#e6e6e6;"></div>
<div class="a" style="left:2412px;top:769px;width:1px;height:22px;background:#e6e6e6;"></div>
<svg style="left:2308px;top:771px;" width="16" height="19" viewBox="0 0 16 19"><g fill="none" stroke="#555" stroke-width="1.7"><path d="M1.5 12 V17.5 H14.5 V12"/></g><g stroke="#555" stroke-width="1.6"><path d="M4 14.8 H12 M4.3 11.8 L12 12.6 M5 8.6 L12.3 10.4 M6.8 5.3 L13 8.5 M9.5 2 L14 6.5"/></g></svg>
<svg style="left:2346px;top:772px;" width="18" height="14" viewBox="0 0 18 14"><g fill="#555"><rect x="0" y="0" width="18" height="2.5"/><rect x="0" y="3.8" width="18" height="2.5"/><rect x="0" y="7.6" width="18" height="2.5"/><rect x="0" y="11.4" width="18" height="2.5"/></g></svg>
<svg style="left:2385px;top:772px;" width="17" height="16" viewBox="0 0 17 16"><path d="M13.8 4.5 A6.6 6.6 0 1 0 14.3 11.5" fill="none" stroke="#555" stroke-width="2.3"/><path d="M10.5 0.5 H16.5 V6.5Z" fill="#555"/></svg>
<svg style="left:2421px;top:774px;" width="13" height="13" viewBox="0 0 13 13"><path d="M2.2 2.2 L10.8 10.8 M10.8 2.2 L2.2 10.8" stroke="#555" stroke-width="3.4" stroke-linecap="round"/></svg>
<div class="t" style="left:1862px;top:746.0px;font-size:24px;line-height:34px;color:#676a6c">全场波胆<span class="lt">:0:0</span><br>上半场波胆<span class="lt">:0:0</span></div>
<div class="a" style="left:457px;top:847px;width:30px;height:30px;background:#fff;border:1px solid #dcdcdc"></div>
<div class="t" style="left:542px;top:849.5px;font-size:25.75px;line-height:26px;color:#676a6c">4425</div>
<div class="t" style="left:631px;top:850.0px;font-size:24px;line-height:24px;color:#3592c4"><span class="lk">墨西女超秋</span></div>
<div class="t" style="left:786px;top:850.0px;font-size:24px;line-height:24px;color:#3592c4"><span class="lk">蒙特瑞女足<span class="lt">vs</span>尼卡沙女足</span></div>
<div class="t" style="left:1160px;top:849.5px;font-size:25.75px;line-height:26px;color:#3592c4"><span class="lk" style="padding-bottom:2.5px">2026-01-12 08:00</span></div>
<div class="t" style="left:1400px;top:849.5px;font-size:25.75px;line-height:26px;color:#676a6c">0</div>
<div class="t" style="left:1569px;top:850.0px;font-size:24.75px;line-height:26px;color:#676a6c">5:0|3:0</div>
<div class="t" style="left:1692px;top:850.0px;font-size:24px;line-height:24px;color:#3592c4"><span class="lk">开始波胆</span></div>
<div class="t" style="left:2058px;top:849.5px;font-size:25.75px;line-height:26px;color:#676a6c">2026-01-11 22:33</div>
<div class="a" style="left:2297px;top:851px;width:145px;height:22px;background:#f4f4f4;border:1px solid #e6e6e6;border-radius:3px"></div>
<div class="a" style="left:2335px;top:851px;width:1px;height:22px;background:#e6e6e6;"></div>
<div class="a" style="left:2373px;top:851px;width:1px;height:22px;background:#e6e6e6;"></div>
<div class="a" style="left:2412px;top:851px;width:1px;height:22px;background:#e6e6e6;"></div>
<svg style="left:2308px;top:853px;" width="16" height="19" viewBox="0 0 16 19"><g fill="none" stroke="#555" stroke-width="1.7"><path d="M1.5 12 V17.5 H14.5 V12"/></g><g stroke="#555" stroke-width="1.6"><path d="M4 14.8 H12 M4.3 11.8 L12 12.6 M5 8.6 L12.3 10.4 M6.8 5.3 L13 8.5 M9.5 2 L14 6.5"/></g></svg>
<svg style="left:2346px;top:854px;" width="18" height="14" viewBox="0 0 18 14"><g fill="#555"><rect x="0" y="0" width="18" height="2.5"/><rect x="0" y="3.8" width="18" height="2.5"/><rect x="0" y="7.6" width="18" height="2.5"/><rect x="0" y="11.4" width="18" height="2.5"/></g></svg>
<svg style="left:2385px;top:854px;" width="17" height="16" viewBox="0 0 17 16"><path d="M13.8 4.5 A6.6 6.6 0 1 0 14.3 11.5" fill="none" stroke="#555" stroke-width="2.3"/><path d="M10.5 0.5 H16.5 V6.5Z" fill="#555"/></svg>
<svg style="left:2421px;top:856px;" width="13" height="13" viewBox="0 0 13 13"><path d="M2.2 2.2 L10.8 10.8 M10.8 2.2 L2.2 10.8" stroke="#555" stroke-width="3.4" stroke-linecap="round"/></svg>
<div class="t" style="left:1862px;top:850.0px;font-size:24px;line-height:24px;color:#676a6c">全场波胆<span class="lt">:3:0</span></div>
<div class="a" style="left:457px;top:930px;width:30px;height:30px;background:#fff;border:1px solid #dcdcdc"></div>
<div class="t" style="left:542px;top:932.5px;font-size:25.75px;line-height:26px;color:#676a6c">4424</div>
<div class="t" style="left:631px;top:933.0px;font-size:24px;line-height:24px;color:#3592c4"><span class="lk">巴巴多超</span></div>
<div class="t" style="left:786px;top:933.0px;font-size:24px;line-height:24px;color:#3592c4"><span class="lk">布里顿斯山<span class="lt">vs</span>巴巴多斯<span class="lt">FC</span></span></div>
<div class="t" style="left:1160px;top:932.5px;font-size:25.75px;line-height:26px;color:#3592c4"><span class="lk" style="padding-bottom:2.5px">2026-01-12 08:00</span></div>
<div class="t" style="left:1400px;top:932.5px;font-size:25.75px;line-height:26px;color:#676a6c">0</div>
<div class="t" style="left:1569px;top:933.0px;font-size:24.75px;line-height:26px;color:#676a6c">1:2|1:2</div>
<div class="t" style="left:1692px;top:933.0px;font-size:24px;line-height:24px;color:#3592c4"><span class="lk">开始波胆</span></div>
<div class="t" style="left:2058px;top:932.5px;font-size:25.75px;line-height:26px;color:#676a6c">2026-01-11 22:33</div>
<div class="a" style="left:2297px;top:934px;width:145px;height:22px;background:#f4f4f4;border:1px solid #e6e6e6;border-radius:3px"></div>
<div class="a" style="left:2335px;top:934px;width:1px;height:22px;background:#e6e6e6;"></div>
<div class="a" style="left:2373px;top:934px;width:1px;height:22px;background:#e6e6e6;"></div>
<div class="a" style="left:2412px;top:934px;width:1px;height:22px;background:#e6e6e6;"></div>
<svg style="left:2308px;top:936px;" width="16" height="19" viewBox="0 0 16 19"><g fill="none" stroke="#555" stroke-width="1.7"><path d="M1.5 12 V17.5 H14.5 V12"/></g><g stroke="#555" stroke-width="1.6"><path d="M4 14.8 H12 M4.3 11.8 L12 12.6 M5 8.6 L12.3 10.4 M6.8 5.3 L13 8.5 M9.5 2 L14 6.5"/></g></svg>
<svg style="left:2346px;top:937px;" width="18" height="14" viewBox="0 0 18 14"><g fill="#555"><rect x="0" y="0" width="18" height="2.5"/><rect x="0" y="3.8" width="18" height="2.5"/><rect x="0" y="7.6" width="18" height="2.5"/><rect x="0" y="11.4" width="18" height="2.5"/></g></svg>
<svg style="left:2385px;top:937px;" width="17" height="16" viewBox="0 0 17 16"><path d="M13.8 4.5 A6.6 6.6 0 1 0 14.3 11.5" fill="none" stroke="#555" stroke-width="2.3"/><path d="M10.5 0.5 H16.5 V6.5Z" fill="#555"/></svg>
<svg style="left:2421px;top:939px;" width="13" height="13" viewBox="0 0 13 13"><path d="M2.2 2.2 L10.8 10.8 M10.8 2.2 L2.2 10.8" stroke="#555" stroke-width="3.4" stroke-linecap="round"/></svg>
<div class="t" style="left:1862px;top:911.5px;font-size:24px;line-height:34px;color:#676a6c">全场波胆<span class="lt">:1:2</span><br>上半场波胆<span class="lt">:1:2</span></div>
<div class="a" style="left:457px;top:1030px;width:30px;height:30px;background:#fff;border:1px solid #dcdcdc"></div>
<div class="t" style="left:542px;top:1032.0px;font-size:25.75px;line-height:26px;color:#676a6c">4423</div>
<div class="t" style="left:631px;top:1032.5px;font-size:24px;line-height:24px;color:#3592c4"><span class="lk">巴巴亚联</span></div>
<div class="t" style="left:786px;top:1032.5px;font-size:24px;line-height:24px;color:#3592c4"><span class="lk">巴塞罗那<span class="lt">BAvs</span>加利西亚<span class="lt">BA</span></span></div>
<div class="t" style="left:1160px;top:1032.0px;font-size:25.75px;line-height:26px;color:#3592c4"><span class="lk" style="padding-bottom:2.5px">2026-01-12 08:00</span></div>
<div class="t" style="left:1400px;top:1032.0px;font-size:25.75px;line-height:26px;color:#676a6c">0</div>
<div class="t" style="left:1569px;top:1032.5px;font-size:24.75px;line-height:26px;color:#676a6c">2:0|1:0</div>
<div class="t" style="left:1692px;top:1032.5px;font-size:24px;line-height:24px;color:#3592c4"><span class="lk">开始波胆</span></div>
<div class="t" style="left:2058px;top:1032.0px;font-size:25.75px;line-height:26px;color:#676a6c">2026-01-11 22:33</div>
<div class="a" style="left:2297px;top:1034px;width:145px;height:22px;background:#f4f4f4;border:1px solid #e6e6e6;border-radius:3px"></div>
<div class="a" style="left:2335px;top:1034px;width:1px;height:22px;background:#e6e6e6;"></div>
<div class="a" style="left:2373px;top:1034px;width:1px;height:22px;background:#e6e6e6;"></div>
<div class="a" style="left:2412px;top:1034px;width:1px;height:22px;background:#e6e6e6;"></div>
<svg style="left:2308px;top:1036px;" width="16" height="19" viewBox="0 0 16 19"><g fill="none" stroke="#555" stroke-width="1.7"><path d="M1.5 12 V17.5 H14.5 V12"/></g><g stroke="#555" stroke-width="1.6"><path d="M4 14.8 H12 M4.3 11.8 L12 12.6 M5 8.6 L12.3 10.4 M6.8 5.3 L13 8.5 M9.5 2 L14 6.5"/></g></svg>
<svg style="left:2346px;top:1037px;" width="18" height="14" viewBox="0 0 18 14"><g fill="#555"><rect x="0" y="0" width="18" height="2.5"/><rect x="0" y="3.8" width="18" height="2.5"/><rect x="0" y="7.6" width="18" height="2.5"/><rect x="0" y="11.4" width="18" height="2.5"/></g></svg>
<svg style="left:2385px;top:1037px;" width="17" height="16" viewBox="0 0 17 16"><path d="M13.8 4.5 A6.6 6.6 0 1 0 14.3 11.5" fill="none" stroke="#555" stroke-width="2.3"/><path d="M10.5 0.5 H16.5 V6.5Z" fill="#555"/></svg>
<svg style="left:2421px;top:1039px;" width="13" height="13" viewBox="0 0 13 13"><path d="M2.2 2.2 L10.8 10.8 M10.8 2.2 L2.2 10.8" stroke="#555" stroke-width="3.4" stroke-linecap="round"/></svg>
<div class="t" style="left:1862px;top:1011.0px;font-size:24px;line-height:34px;color:#676a6c">全场波胆<span class="lt">:2:0</span><br>上半场波胆<span class="lt">:1:0</span></div>
<div class="a" style="left:457px;top:1129px;width:30px;height:30px;background:#fff;border:1px solid #dcdcdc"></div>
<div class="t" style="left:542px;top:1131.0px;font-size:25.75px;line-height:26px;color:#676a6c">4422</div>
<div class="t" style="left:631px;top:1131.5px;font-size:24px;line-height:24px;color:#3592c4"><span class="lk">球会友谊</span></div>
<div class="t" style="left:786px;top:1131.5px;font-size:24px;line-height:24px;color:#3592c4"><span class="lk">河床<span class="lt">vs</span>百万富翁</span></div>
<div class="t" style="left:1160px;top:1131.0px;font-size:25.75px;line-height:26px;color:#3592c4"><span class="lk" style="padding-bottom:2.5px">2026-01-12 08:00</span></div>
<div class="t" style="left:1400px;top:1131.0px;font-size:25.75px;line-height:26px;color:#676a6c">0</div>
<div class="t" style="left:1569px;top:1131.5px;font-size:24.75px;line-height:26px;color:#676a6c">1:0|0:0</div>
<div class="t" style="left:1692px;top:1131.5px;font-size:24px;line-height:24px;color:#3592c4"><span class="lk">开始波胆</span></div>
<div class="t" style="left:2058px;top:1131.0px;font-size:25.75px;line-height:26px;color:#676a6c">2026-01-11 22:33</div>
<div class="a" style="left:2297px;top:1133px;width:145px;height:22px;background:#f4f4f4;border:1px solid #e6e6e6;border-radius:3px"></div>
<div class="a" style="left:2335px;top:1133px;width:1px;height:22px;background:#e6e6e6;"></div>
<div class="a" style="left:2373px;top:1133px;width:1px;height:22px;background:#e6e6e6;"></div>
<div class="a" style="left:2412px;top:1133px;width:1px;height:22px;background:#e6e6e6;"></div>
<svg style="left:2308px;top:1135px;" width="16" height="19" viewBox="0 0 16 19"><g fill="none" stroke="#555" stroke-width="1.7"><path d="M1.5 12 V17.5 H14.5 V12"/></g><g stroke="#555" stroke-width="1.6"><path d="M4 14.8 H12 M4.3 11.8 L12 12.6 M5 8.6 L12.3 10.4 M6.8 5.3 L13 8.5 M9.5 2 L14 6.5"/></g></svg>
<svg style="left:2346px;top:1136px;" width="18" height="14" viewBox="0 0 18 14"><g fill="#555"><rect x="0" y="0" width="18" height="2.5"/><rect x="0" y="3.8" width="18" height="2.5"/><rect x="0" y="7.6" width="18" height="2.5"/><rect x="0" y="11.4" width="18" height="2.5"/></g></svg>
<svg style="left:2385px;top:1136px;" width="17" height="16" viewBox="0 0 17 16"><path d="M13.8 4.5 A6.6 6.6 0 1 0 14.3 11.5" fill="none" stroke="#555" stroke-width="2.3"/><path d="M10.5 0.5 H16.5 V6.5Z" fill="#555"/></svg>
<svg style="left:2421px;top:1138px;" width="13" height="13" viewBox="0 0 13 13"><path d="M2.2 2.2 L10.8 10.8 M10.8 2.2 L2.2 10.8" stroke="#555" stroke-width="3.4" stroke-linecap="round"/></svg>
<div class="t" style="left:1862px;top:1110.0px;font-size:24px;line-height:34px;color:#676a6c">全场波胆<span class="lt">:1:0</span><br>上半场波胆<span class="lt">:0:0</span></div>
</body></html>
